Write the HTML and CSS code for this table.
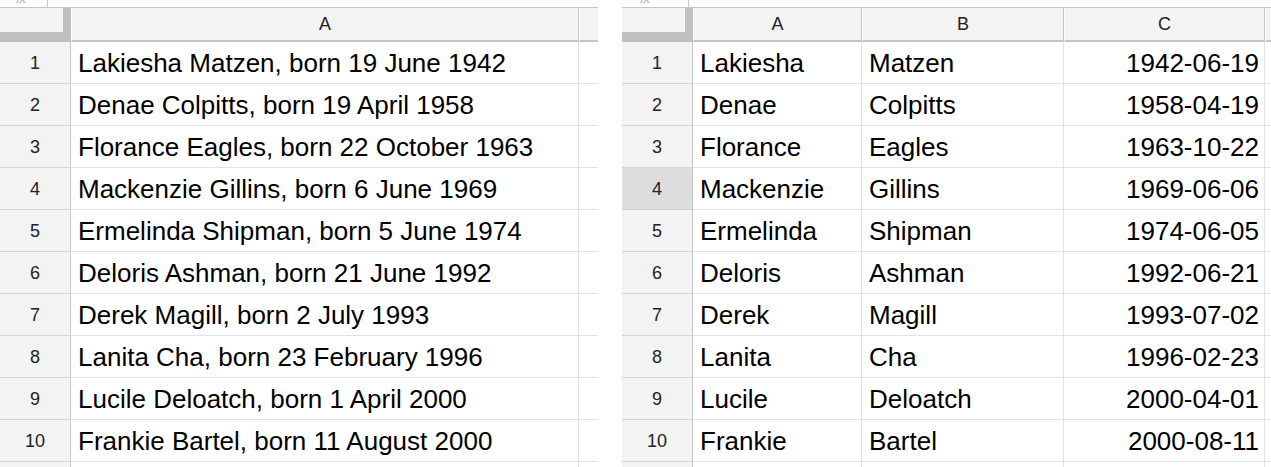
FILE: index.html
```html
<!DOCTYPE html>
<html>
<head>
<meta charset="utf-8">
<link rel="stylesheet" href="styles.css">
</head>
<body>
<div class="page">
  <div class="sheet sheet-left">
    <div class="fx fx-left"><span class="fx-label">fx</span></div>
    <div class="row head">
      <div class="corner"></div>
      <div class="colh wA">A</div>
      <div class="colh wrest"></div>
    </div>
    <div class="row"><div class="rn">1</div><div class="cell wA">Lakiesha Matzen, born 19 June 1942</div><div class="cell wrest"></div></div>
    <div class="row"><div class="rn">2</div><div class="cell wA">Denae Colpitts, born 19 April 1958</div><div class="cell wrest"></div></div>
    <div class="row"><div class="rn">3</div><div class="cell wA">Florance Eagles, born 22 October 1963</div><div class="cell wrest"></div></div>
    <div class="row"><div class="rn">4</div><div class="cell wA">Mackenzie Gillins, born 6 June 1969</div><div class="cell wrest"></div></div>
    <div class="row"><div class="rn">5</div><div class="cell wA">Ermelinda Shipman, born 5 June 1974</div><div class="cell wrest"></div></div>
    <div class="row"><div class="rn">6</div><div class="cell wA">Deloris Ashman, born 21 June 1992</div><div class="cell wrest"></div></div>
    <div class="row"><div class="rn">7</div><div class="cell wA">Derek Magill, born 2 July 1993</div><div class="cell wrest"></div></div>
    <div class="row"><div class="rn">8</div><div class="cell wA">Lanita Cha, born 23 February 1996</div><div class="cell wrest"></div></div>
    <div class="row"><div class="rn">9</div><div class="cell wA">Lucile Deloatch, born 1 April 2000</div><div class="cell wrest"></div></div>
    <div class="row"><div class="rn">10</div><div class="cell wA">Frankie Bartel, born 11 August 2000</div><div class="cell wrest"></div></div>
    <div class="row"><div class="rn"></div><div class="cell wA"></div><div class="cell wrest"></div></div>
  </div>

  <div class="sheet sheet-right">
    <div class="fx fx-right"><span class="fx-label">fx</span></div>
    <div class="row head">
      <div class="corner"></div>
      <div class="colh w1">A</div>
      <div class="colh w2">B</div>
      <div class="colh w3">C</div>
      <div class="colh wrest"></div>
    </div>
    <div class="row"><div class="rn">1</div><div class="cell w1">Lakiesha</div><div class="cell w2">Matzen</div><div class="cell w3 num">1942-06-19</div><div class="cell wrest"></div></div>
    <div class="row"><div class="rn">2</div><div class="cell w1">Denae</div><div class="cell w2">Colpitts</div><div class="cell w3 num">1958-04-19</div><div class="cell wrest"></div></div>
    <div class="row"><div class="rn">3</div><div class="cell w1">Florance</div><div class="cell w2">Eagles</div><div class="cell w3 num">1963-10-22</div><div class="cell wrest"></div></div>
    <div class="row"><div class="rn active">4</div><div class="cell w1">Mackenzie</div><div class="cell w2">Gillins</div><div class="cell w3 num">1969-06-06</div><div class="cell wrest"></div></div>
    <div class="row"><div class="rn">5</div><div class="cell w1">Ermelinda</div><div class="cell w2">Shipman</div><div class="cell w3 num">1974-06-05</div><div class="cell wrest"></div></div>
    <div class="row"><div class="rn">6</div><div class="cell w1">Deloris</div><div class="cell w2">Ashman</div><div class="cell w3 num">1992-06-21</div><div class="cell wrest"></div></div>
    <div class="row"><div class="rn">7</div><div class="cell w1">Derek</div><div class="cell w2">Magill</div><div class="cell w3 num">1993-07-02</div><div class="cell wrest"></div></div>
    <div class="row"><div class="rn">8</div><div class="cell w1">Lanita</div><div class="cell w2">Cha</div><div class="cell w3 num">1996-02-23</div><div class="cell wrest"></div></div>
    <div class="row"><div class="rn">9</div><div class="cell w1">Lucile</div><div class="cell w2">Deloatch</div><div class="cell w3 num">2000-04-01</div><div class="cell wrest"></div></div>
    <div class="row"><div class="rn">10</div><div class="cell w1">Frankie</div><div class="cell w2">Bartel</div><div class="cell w3 num">2000-08-11</div><div class="cell wrest"></div></div>
    <div class="row"><div class="rn"></div><div class="cell w1"></div><div class="cell w2"></div><div class="cell w3"></div><div class="cell wrest"></div></div>
  </div>
</div>
</body>
</html>
```

FILE: styles.css
```css
html, body {
  margin: 0;
  padding: 0;
  background: #ffffff;
  overflow: hidden;
}

.page {
  display: flex;
  gap: 24px;
  width: 1271px;
  height: 467px;
  overflow: hidden;
  font-family: "Liberation Sans", Arial, sans-serif;
}

.sheet {
  display: flex;
  flex-direction: column;
  overflow: hidden;
  flex: none;
}

.sheet-left { width: 598px; }
.sheet-right { width: 649px; }

.fx {
  height: 7px;
  border-bottom: 1px solid #c4c4c4;
  overflow: hidden;
  position: relative;
  flex: none;
}

.fx::after {
  content: "";
  position: absolute;
  top: 0;
  bottom: 0;
  border-left: 1px solid #c8c8c8;
}

.fx-left::after { left: 47px; }
.fx-right::after { left: 66px; }

.fx-label {
  display: block;
  margin-top: -8px;
  font-size: 13px;
  line-height: 14px;
  font-style: italic;
  color: #b0b0b0;
}

.fx-left .fx-label { padding-left: 16px; }
.fx-right .fx-label { padding-left: 18px; }

.row {
  display: flex;
  height: 42px;
  flex: none;
}

.row.head {
  height: 34px;
}

.corner {
  width: 63px;
  height: 24px;
  flex: none;
  background: #f3f3f3;
  border-right: 8px solid #c0c0c0;
  border-bottom: 10px solid #c0c0c0;
}

.colh {
  flex: none;
  box-sizing: border-box;
  height: 34px;
  background: #f3f3f3;
  border-left: 1px solid #ffffff;
  border-right: 1px solid #c4c4c4;
  border-bottom: 2px solid #c4c4c4;
  color: #222222;
  font-size: 18px;
  display: flex;
  align-items: center;
  justify-content: center;
  padding-top: 1px;
}

.rn {
  width: 71px;
  flex: none;
  box-sizing: border-box;
  background: #f3f3f3;
  border-right: 1px solid #c8c8c8;
  border-bottom: 1px solid #d4d4d4;
  color: #222222;
  font-size: 18px;
  display: flex;
  align-items: center;
  justify-content: center;
  padding-top: 2px;
}

.rn.active {
  background: #dddddd;
}

.cell {
  flex: none;
  box-sizing: border-box;
  border-right: 1px solid #e2e2e2;
  border-bottom: 1px solid #e2e2e2;
  color: #000000;
  font-size: 26px;
  padding: 2px 5px 0 7px;
  display: flex;
  align-items: center;
  white-space: nowrap;
  overflow: hidden;
}

.cell.num {
  justify-content: flex-end;
}

.colh.wA, .cell.wA { width: 508px; }
.colh.wrest, .cell.wrest { width: 60px; }

.colh.w1, .cell.w1 { width: 169px; }
.colh.w2, .cell.w2 { width: 202px; }
.colh.w3, .cell.w3 { width: 201px; }
```
